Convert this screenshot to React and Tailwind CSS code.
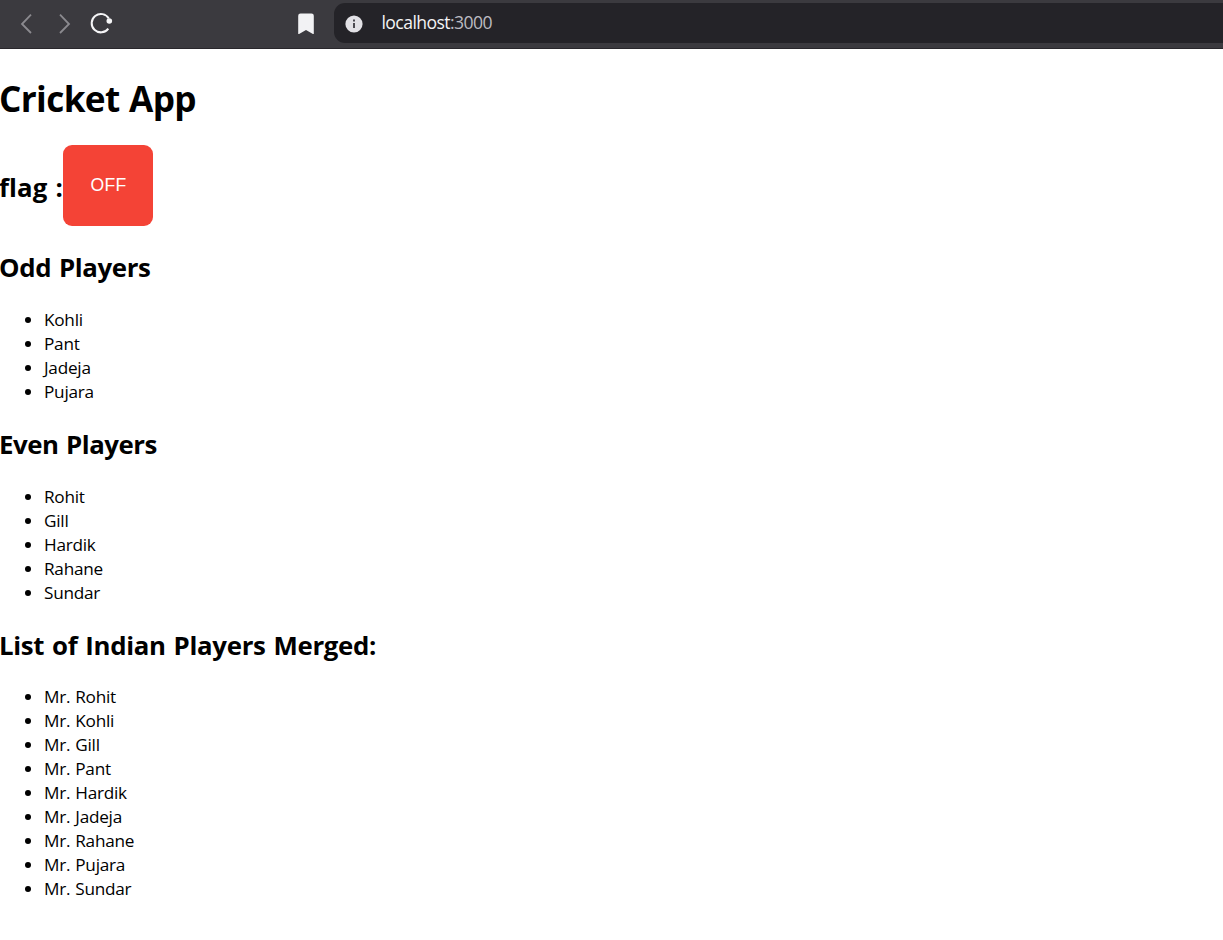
import React from "react";

const sections = [
  { title: "Odd Players", heading: "tracking-[-0.36px]", list: "mt-[23px]", players: ["Kohli", "Pant", "Jadeja", "Pujara"] },
  { title: "Even Players", heading: "mt-[23px] tracking-[-0.48px]", list: "mt-[23px]", players: ["Rohit", "Gill", "Hardik", "Rahane", "Sundar"] },
  {
    title: "List of Indian Players Merged:",
    heading: "mt-[23px] tracking-[-0.31px]",
    list: "mt-[22px]",
    players: ["Mr. Rohit", "Mr. Kohli", "Mr. Gill", "Mr. Pant", "Mr. Hardik", "Mr. Jadeja", "Mr. Rahane", "Mr. Pujara", "Mr. Sundar"],
  },
];

function BrowserBar() {
  return (
    <header className="flex h-[49px] items-start border-b border-[#29272c] bg-[#3b3a3f]">
      <div className="flex h-[47px] w-[334px] shrink-0 items-center">
        <svg className="ml-[20px] h-5 w-3 shrink-0" viewBox="0 0 12 20" fill="none" stroke="#8b8a8f" strokeWidth="1.8">
          <path d="M11 .7 2 10l9 9" />
        </svg>
        <svg className="ml-[27px] h-5 w-3 shrink-0" viewBox="0 0 12 20" fill="none" stroke="#8b8a8f" strokeWidth="1.8">
          <path d="M1 .7 10 10l-9 9" />
        </svg>
        <svg className="ml-[18px] h-6 w-6 shrink-0" viewBox="0 0 24 24" fill="none">
          <path d="M19.800 6.500A9.200 9.200 0 1 0 19.300 16.600" stroke="#f5f5f7" strokeWidth="2" />
          <circle cx="20.3" cy="9" r="2.8" fill="#f5f5f7" />
        </svg>
        <svg className="ml-[184.500px] h-[22px] w-4 shrink-0" viewBox="0 0 16 22">
          <path d="M2.5.5h11A2.3 2.3 0 0 1 15.8 2.8V20.500q0 .9-.9.5L8 17.1 1.1 21Q.2 21.4.2 20.500V2.800A2.300 2.300 0 0 1 2.500.5Z" fill="#f2f2f4" />
        </svg>
      </div>
      <div className="mt-[3px] flex h-10 flex-1 items-center rounded-l-[11px] bg-[#242328]">
        <svg className="ml-[11px] mt-[2px] h-[18px] w-[18px]" viewBox="0 0 18 18">
          <circle cx="9" cy="9" r="8.6" fill="#e2e1e6" />
          <path d="M8 4.500h2v2H8zM8 8h2v5H8z" fill="#4b4a50" />
        </svg>
        <span className="mb-[3px] ml-[18.500px] text-[17.600px] leading-6 tracking-[-0.58px] text-[#f4f4f6]">
          localhost<span className="text-[#bcbbc1]">:3000</span>
        </span>
      </div>
    </header>
  );
}

export default function App() {
  return (
    <div className="h-[940px] overflow-hidden bg-white font-['Open_Sans','Noto_Sans',sans-serif] text-black">
      <BrowserBar />
      <main className="pt-[26px]">
        <h1 className="-ml-px h-[47px] text-[35.200px] leading-[47px] font-bold tracking-[-0.65px] [word-spacing:1px]">Cricket App</h1>
        <div className="mt-[23px] flex items-center">
          <h2 className="-ml-px w-[64px] pt-[4px] text-[25.800px] leading-[35px] font-bold whitespace-nowrap tracking-[0.1px] [word-spacing:1.300px]">
            flag :
          </h2>
          <button className="h-[81px] w-[90px] rounded-[9px] bg-[#f44336] pb-px pl-px font-['Liberation_Sans',sans-serif] text-[17.600px] tracking-[0.2px] text-white">
            OFF
          </button>
        </div>
        <div className="pt-6">
          {sections.map(({ title, heading, list, players }) => (
            <section key={title}>
              <h2 className={`-ml-px h-[35px] text-[25.800px] leading-[35px] font-bold [word-spacing:1.500px] ${heading}`}>{title}</h2>
              <ul className={list}>
                {players.map((name) => (
                  <li
                    key={name}
                    className="flex h-6 items-center pl-[25px] text-[17.200px] leading-6 tracking-[-0.25px] before:mr-[13px] before:size-[6px] before:rounded-full before:bg-black [word-spacing:0.800px]"
                  >
                    {name}
                  </li>
                ))}
              </ul>
            </section>
          ))}
        </div>
      </main>
    </div>
  );
}
